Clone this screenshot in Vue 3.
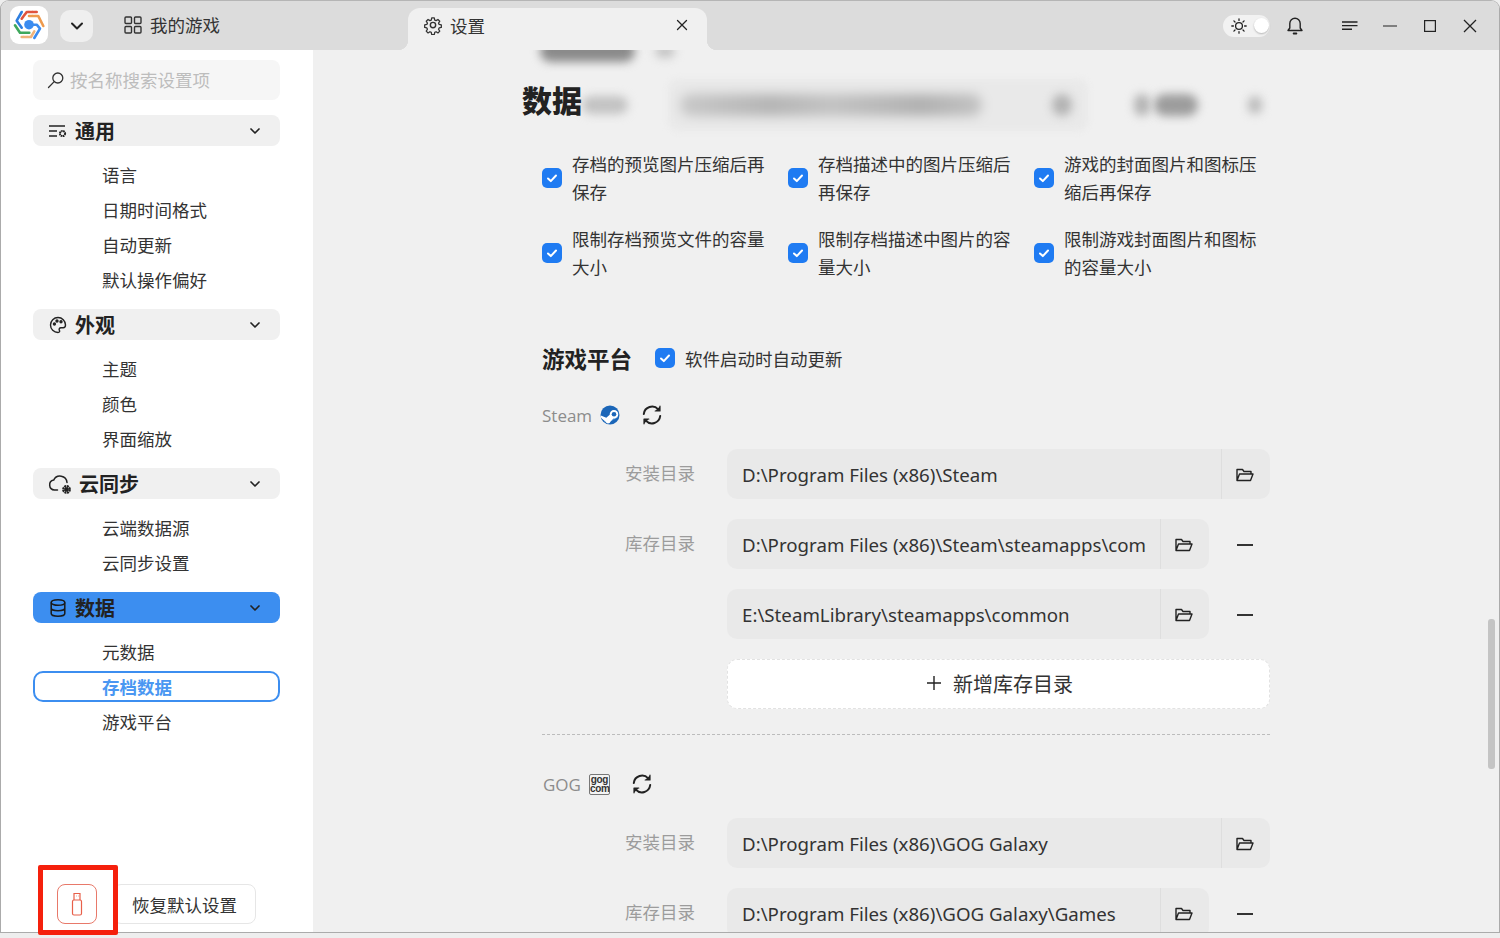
<script setup>
const groups = [
  { key: 'general', title: '通用', items: ['语言', '日期时间格式', '自动更新', '默认操作偏好'] },
  { key: 'look', title: '外观', items: ['主题', '颜色', '界面缩放'] },
  { key: 'cloud', title: '云同步', items: ['云端数据源', '云同步设置'] },
  { key: 'data', title: '数据', active: true, items: ['元数据', '存档数据', '游戏平台'] },
]
const checks = [
  ['存档的预览图片压缩后再', '保存'],
  ['存档描述中的图片压缩后', '再保存'],
  ['游戏的封面图片和图标压', '缩后再保存'],
  ['限制存档预览文件的容量', '大小'],
  ['限制存档描述中图片的容', '量大小'],
  ['限制游戏封面图片和图标', '的容量大小'],
]
</script>

<template>
  <div class="page">
    <div class="window">
      <header class="titlebar">
        <div class="logo">
          <svg width="38" height="38" viewBox="0 0 38 38" fill="none" stroke-width="2.6" stroke-linecap="round" stroke-linejoin="round">
            <path d="M11.700 12.700 16.700 6H26.700" stroke="#e0533d" stroke-dasharray="3 .6" />
            <path d="M19 10H28.300L33.300 20" stroke="#ee9a4d" stroke-dasharray="3 .6" />
            <path d="M19 18.700H26.700L30 22.600 24.300 32" stroke="#3b8cf0" />
            <path d="M24.300 25.300 21 31H11.700" stroke="#efb37a" stroke-dasharray="3 .6" />
            <path d="M5 19.300 10 26.700H19.300" stroke="#3fa85c" />
            <path d="M11.700 6 6.700 14.700 11.700 21.700" stroke="#2f7fe0" />
            <circle cx="19" cy="18.700" r="4.800" fill="#3b8cf0" stroke="none" />
          </svg>
        </div>
        <button class="dropdown" type="button">
          <svg width="16" height="16" viewBox="0 0 16 16" fill="none" stroke="#222" stroke-width="2" stroke-linecap="round" stroke-linejoin="round"><path d="m3 5.500 5 5 5-5" /></svg>
        </button>
        <div class="home-tab">
          <svg width="18" height="18" viewBox="0 0 18 18" fill="none" stroke="#333" stroke-width="1.400"><rect x="1" y="1" width="6.500" height="6.500" rx="1" /><rect x="10.500" y="1" width="6.500" height="6.500" rx="1" /><rect x="1" y="10.500" width="6.500" height="6.500" rx="1" /><rect x="10.500" y="10.500" width="6.500" height="6.500" rx="1" /></svg>
          <span>我的游戏</span>
        </div>
        <div class="active-tab">
          <svg width="20" height="20" viewBox="0 0 24 24" fill="none" stroke="#333" stroke-width="1.700" stroke-linejoin="round"><circle cx="12" cy="12" r="3.200" /><path d="M10.300 2.500h3.400l.6 2.900 1.800.8 2.500-1.600 2.400 2.400-1.600 2.500.8 1.800 2.900.6v3.400l-2.900.6-.8 1.800 1.600 2.500-2.400 2.400-2.500-1.600-1.800.8-.6 2.900h-3.400l-.6-2.900-1.800-.8-2.500 1.600-2.400-2.400 1.600-2.500-.8-1.800-2.900-.6v-3.400l2.900-.6.8-1.800-1.600-2.500 2.400-2.400 2.500 1.600 1.800-.8z" transform="translate(1.200 1.200) scale(.9)" /></svg>
          <span>设置</span>
          <svg class="tab-close" width="12" height="12" viewBox="0 0 12 12" stroke="#222" stroke-width="1.300" stroke-linecap="round"><path d="m1.500 1.500 9 9m0-9-9 9" /></svg>
        </div>
        <div class="win-tools">
          <div class="theme-toggle">
            <svg width="16" height="16" viewBox="0 0 16 16" fill="none" stroke="#222" stroke-width="1.300" stroke-linecap="round"><circle cx="8" cy="8" r="3.400" /><path d="M8 .8v1.600M8 13.600v1.600M.8 8h1.600M13.600 8h1.600M2.900 2.900 4 4M12 12l1.100 1.100M2.900 13.100 4 12M12 4l1.100-1.100" /></svg>
            <span class="knob"></span>
          </div>
          <svg class="bell" width="18" height="20" viewBox="0 0 18 20" fill="none" stroke="#222" stroke-width="1.400" stroke-linejoin="round" stroke-linecap="round"><path d="M2 14.500h14l-1.800-2.500V7.500a5.200 5.200 0 0 0-10.400 0V12z" /><path d="M7.600 17.500h2.800" stroke-width="1.800" /></svg>
          <svg class="menu" width="16" height="10" viewBox="0 0 16 10" stroke="#222" stroke-width="1.400"><path d="M0 1h15.500M0 4.600h15.500M0 8.200h10" /></svg>
          <svg class="min" width="14" height="2" viewBox="0 0 14 2" stroke="#222" stroke-width="1.200"><path d="M0 1h14" /></svg>
          <svg class="max" width="12" height="12" viewBox="0 0 12 12" fill="none" stroke="#222" stroke-width="1.200"><rect x=".6" y=".6" width="10.800" height="10.800" /></svg>
          <svg class="close" width="14" height="14" viewBox="0 0 14 14" stroke="#222" stroke-width="1.300"><path d="m1 1 12 12M13 1 1 13" /></svg>
        </div>
      </header>

      <div class="body">
        <aside class="sidebar">
          <div class="search">
            <svg width="18" height="18" viewBox="0 0 18 18" fill="none" stroke="#333" stroke-width="1.300" stroke-linecap="round"><circle cx="10.800" cy="7" r="5" /><path d="M7.200 10.600 1.500 16.500" /></svg>
            <span>按名称搜索设置项</span>
          </div>
          <section v-for="g in groups" :key="g.key" class="group">
            <div class="group-head" :class="{ on: g.active }">
              <svg v-if="g.key === 'general'" class="gicon" width="20" height="20" viewBox="0 0 20 20" fill="none" stroke="#222" stroke-width="1.500"><path d="M1 5h16M1 10h8M1 15h8" /><circle cx="14.500" cy="12.500" r="2.600" stroke-width="2" stroke-dasharray="1.600 .5" /></svg>
              <svg v-else-if="g.key === 'look'" class="gicon" width="20" height="20" viewBox="0 0 20 20" fill="none" stroke="#222" stroke-width="1.400"><path d="M10 2.500a7.500 7.500 0 1 0 0 15c1.600 0 2-1.200 1.400-2.200-.7-1.200 0-2.600 1.500-2.600h2.300c1.500 0 2.300-1 2.300-2.700 0-4.300-3.400-7.500-7.500-7.500z" /><circle cx="6.400" cy="9" r="1" fill="#222" /><circle cx="9" cy="6" r="1" fill="#222" /><circle cx="13" cy="6.800" r="1" fill="#222" /></svg>
              <svg v-else-if="g.key === 'cloud'" class="gicon cloud" width="25" height="24" viewBox="0 0 25 24" fill="none" stroke="#222" stroke-width="1.500" stroke-linecap="round"><path d="M9.500 18H6.500a5 5 0 0 1-.8-9.900 7 7 0 0 1 13.300 2.400" /><circle cx="18.500" cy="17.500" r="3.200" stroke-width="2.400" stroke-dasharray="1.900 .6" stroke-linecap="butt" /><circle cx="18.500" cy="17.500" r="2.200" fill="#222" stroke="none" /></svg>
              <svg v-else class="gicon" width="20" height="20" viewBox="0 0 20 20" fill="none" stroke="#1a1a1a" stroke-width="1.500"><ellipse cx="10" cy="4.500" rx="6.800" ry="2.800" /><path d="M3.200 4.500v11c0 1.500 3 2.800 6.800 2.800s6.800-1.300 6.800-2.800v-11M3.200 10c0 1.500 3 2.800 6.800 2.800s6.800-1.300 6.800-2.800" /></svg>
              <span class="gtitle">{{ g.title }}</span>
              <svg class="chev" width="12" height="12" viewBox="0 0 12 12" fill="none" stroke="#222" stroke-width="1.700" stroke-linecap="round" stroke-linejoin="round"><path d="m2 4 4 4 4-4" /></svg>
            </div>
            <ul class="items">
              <li v-for="it in g.items" :key="it" :class="{ current: it === '存档数据' }">{{ it }}</li>
            </ul>
          </section>
          <div class="side-foot">
            <button class="usb" type="button">
              <svg width="12" height="24" viewBox="0 0 12 24" fill="none" stroke="#e8604a" stroke-width="1.200"><rect x="1.500" y="8" width="9" height="15" rx="1.500" /><path d="M3 8V1.500h6V8M5 4h.5M7 4h.5" /></svg>
            </button>
            <button class="reset" type="button">恢复默认设置</button>
          </div>
        </aside>

        <main class="main">
          <div class="blur-top">
            <i class="blob b95"></i>
            <i class="blob b20"></i>
          </div>
          <div class="title-row">
            <h1>数据</h1>
            <i class="blob b45"></i>
            <div class="blur-box">
              <i class="blob b300"></i>
            </div>
            <i class="blob b22 a"></i>
            <i class="blob b16"></i>
            <i class="blob b42"></i>
            <i class="blob b18"></i>
          </div>

          <div class="section">
            <div class="check-grid">
              <label v-for="c in checks" :key="c[0]" class="check">
                <span class="box"><svg width="14" height="14" viewBox="0 0 14 14" fill="none" stroke="#fff" stroke-width="2" stroke-linecap="round" stroke-linejoin="round"><path d="m3 7.500 2.800 2.600L11 4.500" /></svg></span>
                <span class="ctext">{{ c[0] }}<br />{{ c[1] }}</span>
              </label>
            </div>

            <div class="platform-head">
              <h2>游戏平台</h2>
              <span class="box"><svg width="14" height="14" viewBox="0 0 14 14" fill="none" stroke="#fff" stroke-width="2" stroke-linecap="round" stroke-linejoin="round"><path d="m3 7.500 2.800 2.600L11 4.500" /></svg></span>
              <span class="auto">软件启动时自动更新</span>
            </div>

            <div class="platform-name steam">
              <span>Steam</span>
              <svg class="brand" width="20" height="20" viewBox="0 0 20 20"><circle cx="10" cy="10" r="9.500" fill="#1b66b8" /><path d="M4 16.500 16 10M7 18 18 12" stroke="#4d90d6" stroke-width=".8" /><path d="M.8 10.500 6.300 12.800l3.400-3.100a4.300 4.300 0 1 1 3.800 3.900l-2.900 2.800a2.800 2.800 0 0 1-5.300.2L1.200 13z" fill="#fff" /><circle cx="14" cy="9.200" r="2.300" fill="#1b66b8" /></svg>
              <svg class="sync" width="22" height="22" viewBox="0 0 22 22" fill="none" stroke="#222" stroke-width="2" stroke-linecap="round"><path d="M2.800 10a8.300 8.300 0 0 1 14.400-4.600M19.200 12a8.300 8.300 0 0 1-14.400 4.600" /><path d="M19 2.200v4.800h-4.800M3 19.800v-4.800h4.800" fill="#222" stroke-width="1.200" stroke-linejoin="round" /></svg>
            </div>

            <div class="path-row first">
              <label>安装目录</label>
              <div class="path wide"><span>D:\Program Files (x86)\Steam</span><button type="button" class="open"><svg width="18" height="14" viewBox="0 0 18 14" fill="none" stroke="#222" stroke-width="1.400" stroke-linejoin="round"><path d="M1 12.500V1.500h5.500l1.500 2h7v2.500M1 12.500 3.500 6H17l-2.500 6.500z" /></svg></button></div>
            </div>
            <div class="path-row">
              <label>库存目录</label>
              <div class="path"><span>D:\Program Files (x86)\Steam\steamapps\com</span><button type="button" class="open"><svg width="18" height="14" viewBox="0 0 18 14" fill="none" stroke="#222" stroke-width="1.400" stroke-linejoin="round"><path d="M1 12.500V1.500h5.500l1.500 2h7v2.500M1 12.500 3.500 6H17l-2.500 6.500z" /></svg></button></div>
              <span class="minus"></span>
            </div>
            <div class="path-row">
              <label></label>
              <div class="path"><span>E:\SteamLibrary\steamapps\common</span><button type="button" class="open"><svg width="18" height="14" viewBox="0 0 18 14" fill="none" stroke="#222" stroke-width="1.400" stroke-linejoin="round"><path d="M1 12.500V1.500h5.500l1.500 2h7v2.500M1 12.500 3.500 6H17l-2.500 6.500z" /></svg></button></div>
              <span class="minus"></span>
            </div>
            <div class="path-row">
              <label></label>
              <button type="button" class="add"><svg width="14" height="14" viewBox="0 0 14 14" stroke="#222" stroke-width="1.400"><path d="M7 0v14M0 7h14" /></svg><span>新增库存目录</span></button>
            </div>

            <div class="divider"></div>

            <div class="platform-name gog">
              <span>GOG</span>
              <span class="gogbox">gog<br />com</span>
              <svg class="sync" width="22" height="22" viewBox="0 0 22 22" fill="none" stroke="#222" stroke-width="2" stroke-linecap="round"><path d="M2.800 10a8.300 8.300 0 0 1 14.400-4.600M19.200 12a8.300 8.300 0 0 1-14.400 4.600" /><path d="M19 2.200v4.800h-4.800M3 19.800v-4.800h4.800" fill="#222" stroke-width="1.200" stroke-linejoin="round" /></svg>
            </div>

            <div class="path-row first gogfirst">
              <label>安装目录</label>
              <div class="path wide"><span>D:\Program Files (x86)\GOG Galaxy</span><button type="button" class="open"><svg width="18" height="14" viewBox="0 0 18 14" fill="none" stroke="#222" stroke-width="1.400" stroke-linejoin="round"><path d="M1 12.500V1.500h5.500l1.500 2h7v2.500M1 12.500 3.500 6H17l-2.500 6.500z" /></svg></button></div>
            </div>
            <div class="path-row">
              <label>库存目录</label>
              <div class="path"><span>D:\Program Files (x86)\GOG Galaxy\Games</span><button type="button" class="open"><svg width="18" height="14" viewBox="0 0 18 14" fill="none" stroke="#222" stroke-width="1.400" stroke-linejoin="round"><path d="M1 12.500V1.500h5.500l1.500 2h7v2.500M1 12.500 3.500 6H17l-2.500 6.500z" /></svg></button></div>
              <span class="minus"></span>
            </div>
          </div>
          <div class="scrollbar"></div>
        </main>
      </div>
    </div>
    <div class="redmark"></div>
  </div>
</template>

<style>
html, body { margin: 0; overflow: hidden; }
</style>

<style scoped>
.page {
  position: relative;
  width: 1500px;
  height: 938px;
  background: #eeeeee;
  overflow: hidden;
  font-family: "Noto Sans CJK SC", "Noto Sans", sans-serif;
  font-size: 17.5px;
  color: #333;
}
.window {
  width: 1500px;
  height: 933px;
  box-sizing: border-box;
  border: 1px solid #ababab;
  border-top-color: #b5b5b5;
  border-radius: 9px 9px 0 0;
  overflow: hidden;
  display: flex;
  flex-direction: column;
  background: #f0f0f0;
}
.titlebar {
  position: relative;
  z-index: 2;
  flex: none;
  height: 49px;
  background: #dcdcdc;
  display: flex;
  align-items: center;
}
.logo {
  width: 38px;
  height: 38px;
  margin-left: 9px;
  margin-top: -1px;
  background: #fff;
  border-radius: 9px;
}
.dropdown {
  width: 33px;
  height: 32px;
  margin-left: 12px;
  padding: 0;
  border: 0;
  background: #efefef;
  border-radius: 10px;
  display: flex;
  align-items: center;
  justify-content: center;
}
.home-tab {
  margin-left: 31px;
  width: 284px;
  display: flex;
  align-items: center;
  gap: 8px;
  color: #333;
  padding-bottom: 2px;
}
.active-tab {
  position: relative;
  align-self: flex-end;
  width: 299px;
  height: 42px;
  box-sizing: border-box;
  padding: 0 19px 8px 15px;
  background: #f0f0f0;
  border-radius: 12px 12px 0 0;
  display: flex;
  align-items: center;
  gap: 7px;
}
.active-tab::before,
.active-tab::after {
  content: "";
  position: absolute;
  bottom: 0;
  width: 10px;
  height: 10px;
}
.active-tab::before {
  left: -10px;
  background: radial-gradient(circle at 0 0, transparent 10px, #f0f0f0 10.5px);
}
.active-tab::after {
  right: -10px;
  background: radial-gradient(circle at 100% 0, transparent 10px, #f0f0f0 10.5px);
}
.tab-close { margin-left: auto; }
.win-tools {
  margin-left: auto;
  display: flex;
  align-items: center;
  padding-right: 22px;
}
.theme-toggle {
  width: 47px;
  height: 22px;
  background: #f2f2f2;
  border-radius: 11px;
  display: flex;
  align-items: center;
  padding-left: 8px;
  box-sizing: border-box;
}
.knob {
  width: 15px;
  height: 15px;
  margin-left: 7px;
  border-radius: 50%;
  background: #fff;
  box-shadow: 0 1px 2px rgba(0, 0, 0, .25);
}
.bell { margin-left: 16px; }
.menu { margin-left: 38px; }
.min { margin-left: 25px; }
.max { margin-left: 27px; }
.close { margin-left: 27px; }

.body {
  flex: 1;
  min-height: 0;
  display: flex;
}
.sidebar {
  position: relative;
  width: 312px;
  flex: none;
  box-sizing: border-box;
  padding: 10px 33px 0 32px;
  background: #fff;
}
.search {
  height: 40px;
  background: #f6f6f6;
  border-radius: 8px;
  display: flex;
  align-items: center;
  gap: 5px;
  padding-left: 14px;
  color: #bdbdbd;
  margin-bottom: 15px;
}
.search span { margin-top: -2px; }
.group-head {
  height: 31px;
  display: flex;
  align-items: center;
  background: #f0f0f0;
  border-radius: 8px;
  padding: 0 19px 0 15px;
  font-size: 20px;
  font-weight: 700;
  color: #222;
}
.group-head.on { background: #3c8ef0; }
.gicon { flex: none; margin-right: 7px; }
.gicon.cloud { margin: 0 6px 0 0; }
.gtitle { line-height: 29px; margin-top: -1px; }
.chev { margin-left: auto; }
.items {
  list-style: none;
  margin: 0;
  padding: 15px 0 12px;
}
.items li {
  height: 31px;
  line-height: 27px;
  margin-bottom: 4px;
  padding-left: 69px;
  box-sizing: border-box;
  color: #333;
  border-radius: 10px;
}
.items li:last-child { margin-bottom: 0; }
.items li.current {
  border: 2px solid #3c8ef0;
  padding-left: 67px;
  margin-top: -2px;
  margin-bottom: 6px;
  color: #4a97f2;
  font-weight: 700;
  line-height: 27px;
}
.side-foot {
  position: absolute;
  left: 56px;
  bottom: 8px;
  display: flex;
  gap: 16px;
}
.usb {
  width: 40px;
  height: 40px;
  padding: 0;
  background: #fff;
  border: 1px solid #e8796a;
  border-radius: 8px;
  display: flex;
  align-items: center;
  justify-content: center;
}
.reset {
  width: 143px;
  height: 40px;
  padding: 0;
  background: #fff;
  border: 1px solid #e6e6e6;
  border-radius: 8px;
  font: inherit;
  color: #333;
}
.main {
  position: relative;
  flex: 1;
  min-width: 0;
  overflow: hidden;
  padding-left: 209px;
  background: #f0f0f0;
}
.blob {
  display: block;
  flex: none;
  height: 22px;
  border-radius: 11px;
  background: #a9a9a9;
  filter: blur(5px);
}
.blur-top {
  display: flex;
  margin: -10px 0 0 18px;
  gap: 20px;
  height: 22px;
  align-items: center;
}
.b95 { width: 95px; background: #8a8a8a; }
.b20 { width: 20px; height: 14px; background: #c4c4c4; }
.title-row {
  margin-top: 23px;
  height: 40px;
  display: flex;
  align-items: center;
}
.title-row h1 {
  margin: -13px 0 0;
  font-size: 30px;
  line-height: 40px;
  font-weight: 900;
  color: #222;
  position: relative;
  z-index: 1;
}
.b45 { width: 46px; background: #c2c2c2; height: 18px; }
.blur-box {
  margin-left: 40px;
  width: 420px;
  height: 52px;
  padding: 0 0 0 12px;
  box-sizing: border-box;
  display: flex;
  align-items: center;
  background: #e9e9e9;
  border-radius: 10px;
  filter: blur(3px);
}
.b300 {
  width: 302px;
  background: linear-gradient(90deg, #c8c8c8, #b4b4b4 30%, #c2c2c2 50%, #b0b0b0 80%, #c2c2c2);
}
.b22 { width: 20px; background: #b3b3b3; }
.b22.a { margin-left: -36px; position: relative; }
.b16 { width: 16px; margin-left: 62px; background: #b4b4b4; }
.b42 { width: 44px; margin-left: 4px; background: #9c9c9c; }
.b18 { width: 14px; margin-left: 50px; height: 18px; background: #bbb; }

.section {
  padding-left: 20px;
  box-sizing: border-box;
  width: 748px;
}
.check-grid {
  margin-top: 25px;
  display: grid;
  grid-template-columns: repeat(3, 246px);
  row-gap: 19px;
}
.check {
  display: flex;
  align-items: center;
  gap: 10px;
}
.box {
  flex: none;
  width: 20px;
  height: 20px;
  border-radius: 5px;
  background: #1f7bf2;
  display: flex;
  align-items: center;
  justify-content: center;
}
.ctext {
  line-height: 28px;
  color: #333;
  white-space: nowrap;
}
.platform-head {
  margin-top: 62px;
  height: 30px;
  display: flex;
  align-items: center;
}
.platform-head h2 {
  margin: 0;
  font-size: 22.500px;
  font-weight: 700;
  color: #222;
}
.platform-head .box { margin-left: 23px; }
.auto { margin-left: 10px; }
.platform-name {
  height: 30px;
  margin-top: 27px;
  display: flex;
  align-items: center;
  font-family: "Open Sans", "Noto Sans", sans-serif;
  font-size: 17px;
  font-weight: 500;
  color: #8c8c8c;
}
.brand { margin-left: 8px; }
.steam .sync { margin-left: 21px; }
.gog { margin-top: 34px; margin-left: 1px; }
.gogbox {
  margin-left: 8px;
  width: 21px;
  height: 21px;
  box-sizing: border-box;
  border: 1px solid #777;
  border-radius: 2px;
  background: #f4f4f4;
  font-family: "Liberation Sans", sans-serif;
  font-size: 10px;
  font-weight: 700;
  letter-spacing: -.3px;
  line-height: 9px;
  text-align: center;
  color: #333;
}
.gog .sync { margin-left: 21px; }
.path-row {
  display: flex;
  align-items: flex-start;
  margin-top: 20px;
}
.path-row.first { margin-top: 19px; }
.path-row > label {
  width: 185px;
  flex: none;
  padding-right: 32px;
  box-sizing: border-box;
  text-align: right;
  color: #9c9c9c;
  line-height: 48px;
  white-space: nowrap;
}
.path {
  width: 482px;
  height: 50px;
  flex: none;
  box-sizing: border-box;
  background: #e9e9e9;
  border-radius: 10px;
  display: flex;
  align-items: center;
  padding-left: 15px;
  font-family: "Noto Sans", sans-serif;
  font-size: 18.700px;
  color: #333;
}
.path.wide { width: 543px; }
.path span { white-space: nowrap; }
.open {
  margin-left: auto;
  width: 49px;
  height: 50px;
  flex: none;
  padding: 1px 2px 0 0;
  background: transparent;
  border: 0;
  border-left: 1px solid #dedede;
  display: flex;
  align-items: center;
  justify-content: center;
}
.minus {
  width: 16px;
  height: 2px;
  margin: 25px 0 0 28px;
  background: #333;
}
.add {
  width: 543px;
  height: 50px;
  padding: 0 0 2px 3px;
  background: #fff;
  border: 1px dashed #e2e2e2;
  border-radius: 10px;
  display: flex;
  align-items: center;
  justify-content: center;
  gap: 12px;
  font-family: "Noto Sans CJK SC", sans-serif;
  font-size: 20px;
  color: #333;
}
.divider {
  margin-top: 25px;
  width: 728px;
  border-top: 1px dashed #bcbcbc;
}
.scrollbar {
  position: absolute;
  right: 4px;
  top: 569px;
  width: 7px;
  height: 150px;
  border-radius: 3px;
  background: #c4c4c4;
}
.redmark {
  position: absolute;
  left: 38px;
  top: 865px;
  width: 80px;
  height: 70px;
  box-sizing: border-box;
  border: 5px solid #f5200c;
  border-radius: 2px;
}
</style>
